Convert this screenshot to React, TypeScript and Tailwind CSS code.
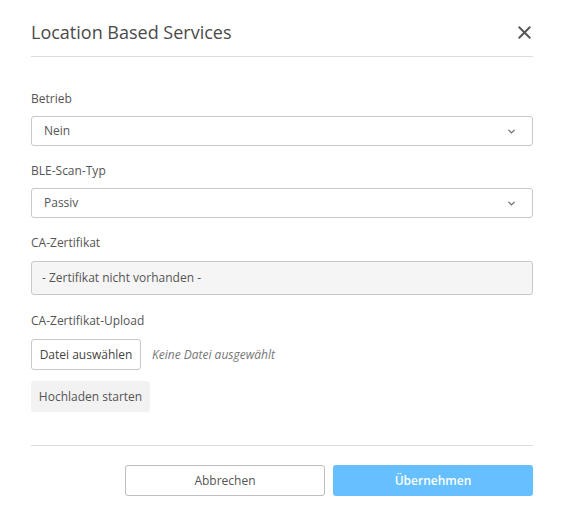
import { X, ChevronDown } from "lucide-react";

const FIELD_LABEL = "block h-4 leading-4 text-[12px] text-[#555]";

function SelectBox({ value }: { value: string }) {
  return (
    <div className="flex h-[30px] items-center justify-between rounded-[3px] border border-[#c8c8c8] bg-white pl-3 pr-[15px] text-[12px] text-[#555]">
      <span>{value}</span>
      <ChevronDown size={11} strokeWidth={2.6} className="text-[#666]" />
    </div>
  );
}

export default function App() {
  return (
    <div
      className="w-[564px] h-[524px] bg-white px-[31px]"
      style={{ fontFamily: '"Open Sans", "Noto Sans", sans-serif' }}
    >
      <div className="mt-[9px] flex h-[48px] items-center justify-between border-b border-[#dcdcdc]">
        <h1 className="text-[18px] text-[#4a4a4a]">Location Based Services</h1>
        <X size={21} strokeWidth={2.2} className="text-[#555] -mr-[2px]" />
      </div>

      <div className="flex flex-col">
        <label className={`${FIELD_LABEL} mt-[34px]`}>Betrieb</label>
        <div className="mt-[9px]">
          <SelectBox value="Nein" />
        </div>

        <label className={`${FIELD_LABEL} mt-[17px]`}>BLE-Scan-Typ</label>
        <div className="mt-[9px]">
          <SelectBox value="Passiv" />
        </div>

        <label className={`${FIELD_LABEL} mt-[17px]`}>CA-Zertifikat</label>
        <div className="mt-[10px] flex h-[34px] items-center rounded-[3px] border border-[#c8c8c8] bg-[#f5f5f5] px-[10px] text-[12px] text-[#555]">
          - Zertifikat nicht vorhanden -
        </div>

        <label className={`${FIELD_LABEL} mt-[18px]`}>CA-Zertifikat-Upload</label>
        <div className="mt-[10px] flex items-center gap-[11px]">
          <button className="h-[31px] w-[110px] rounded-[3px] border border-[#c8c8c8] bg-white text-[12px] text-[#444]">
            Datei auswählen
          </button>
          <span className="text-[12px] italic text-[#777]">Keine Datei ausgewählt</span>
        </div>
        <div className="mt-[11px]">
          <button className="h-[31px] w-[119px] rounded-[3px] bg-[#f2f2f2] text-[12px] text-[#555]">
            Hochladen starten
          </button>
        </div>
      </div>

      <div className="mt-[33px] border-t border-[#dcdcdc]" />

      <div className="mt-[19px] flex justify-end gap-2">
        <button className="h-[31px] w-[200px] rounded-[3px] border border-[#bdbdbd] bg-white text-[12px] text-[#555]">
          Abbrechen
        </button>
        <button className="h-[31px] w-[200px] rounded-[3px] bg-[#66bfff] text-[12px] font-semibold text-white">
          Übernehmen
        </button>
      </div>
    </div>
  );
}
